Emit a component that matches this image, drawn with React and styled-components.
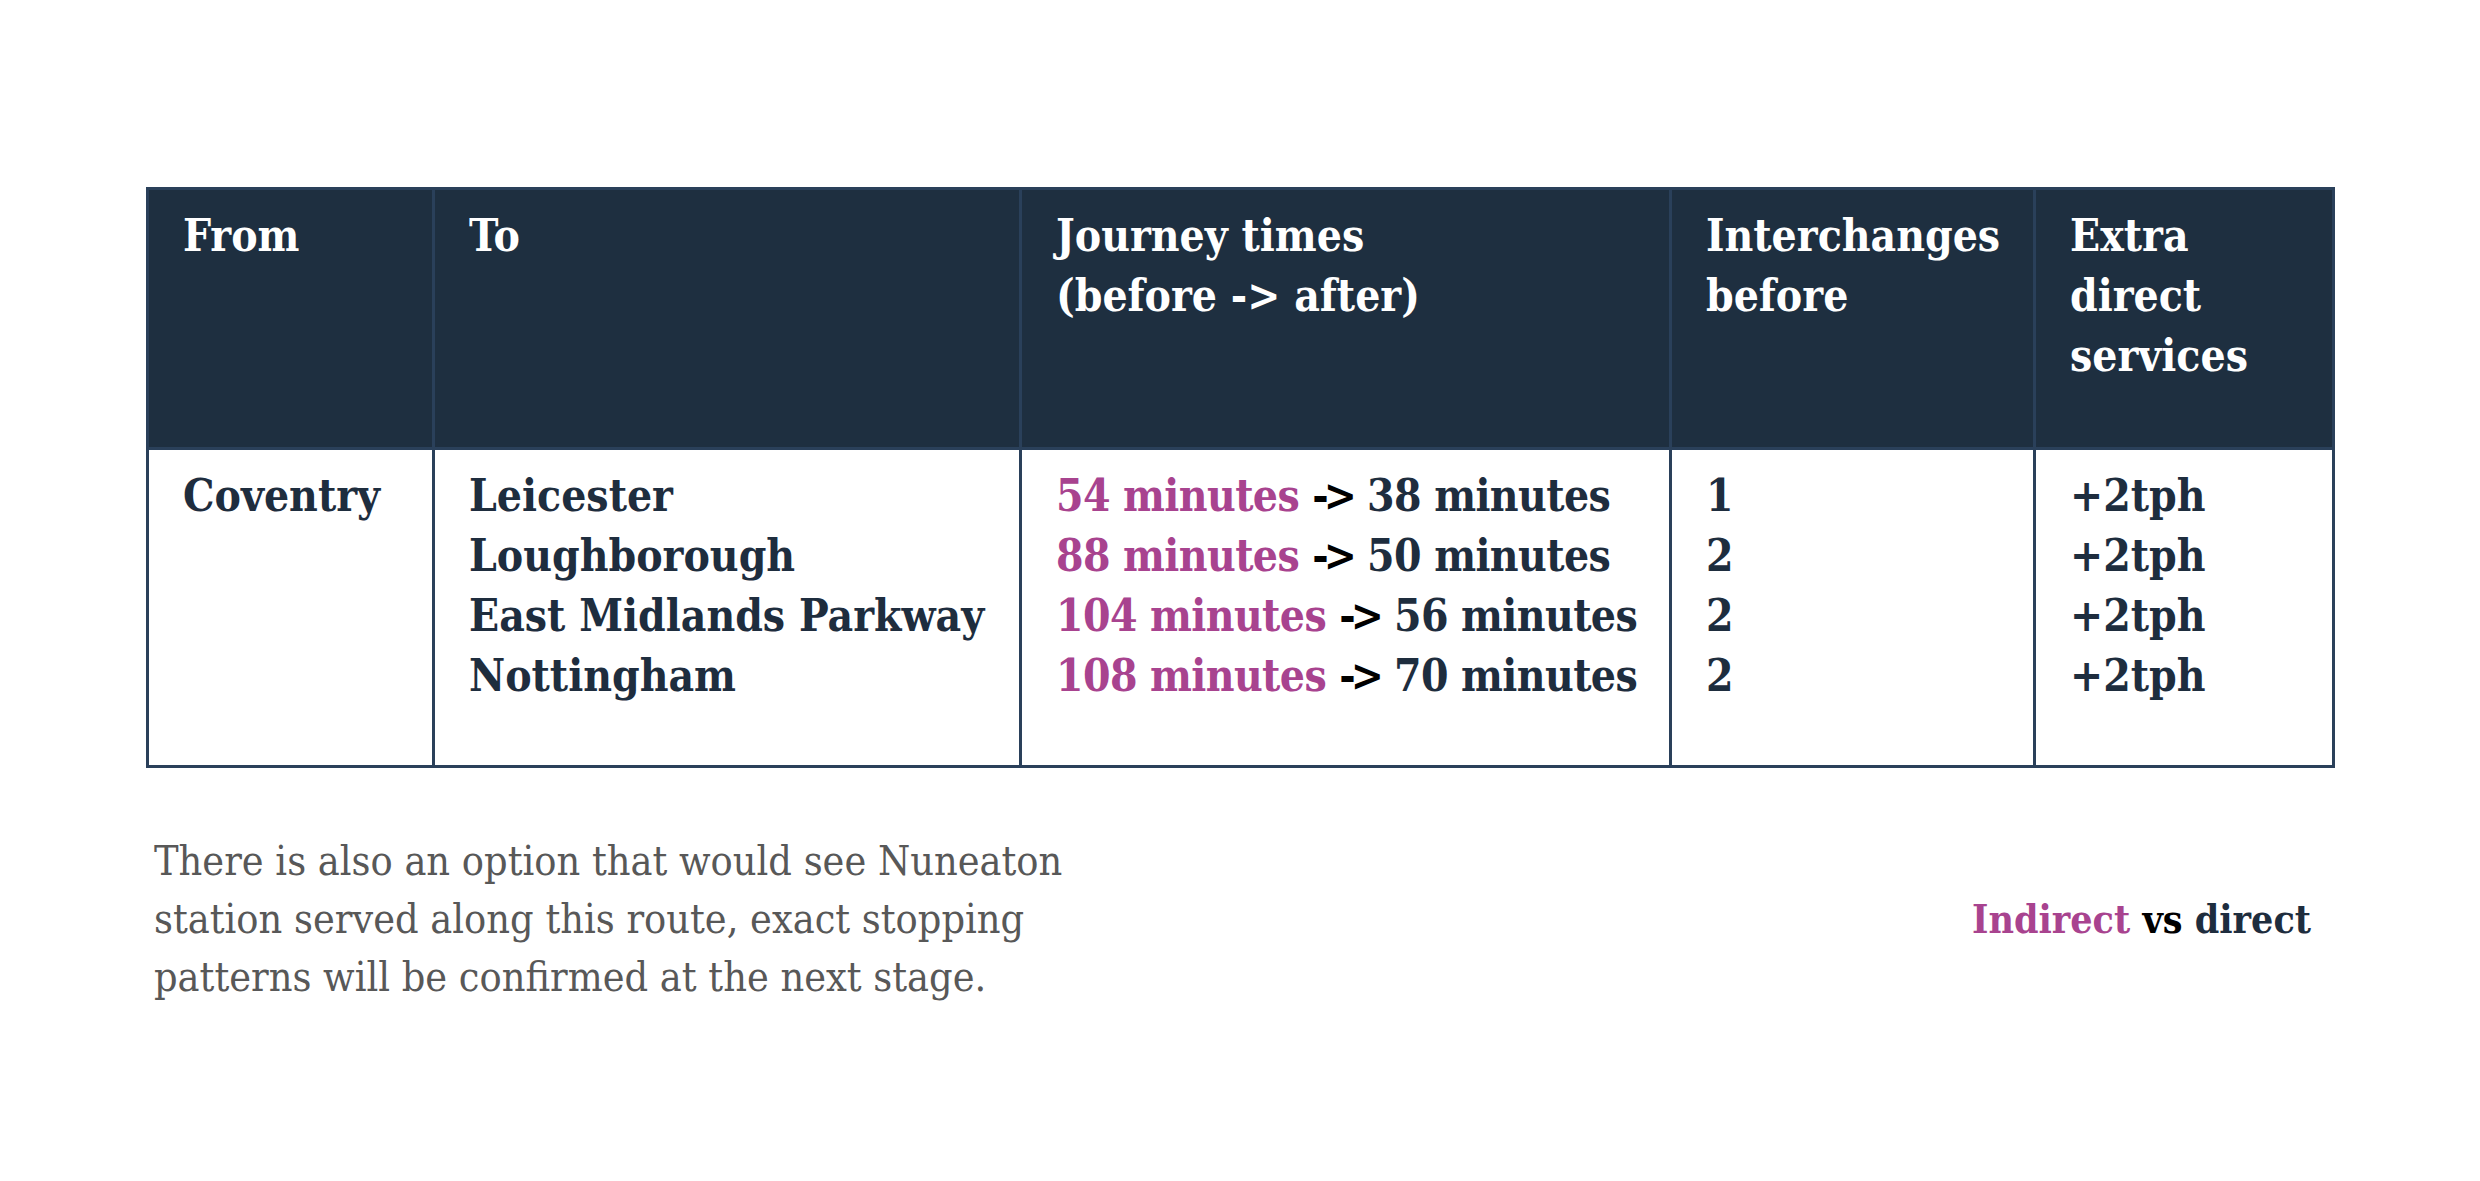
import styled, { createGlobalStyle } from "styled-components"

const GlobalStyle = createGlobalStyle`
  html, body {
    margin: 0;
    padding: 0;
    background: #ffffff;
  }
  body {
    font-family: "DejaVu Serif Condensed", "DejaVu Serif", serif;
    font-stretch: condensed;
  }
`

const routes = [
  { to: "Leicester", before: "54 minutes", after: "38 minutes", changes: 1, extra: "+2tph" },
  { to: "Loughborough", before: "88 minutes", after: "50 minutes", changes: 2, extra: "+2tph" },
  { to: "East Midlands Parkway", before: "104 minutes", after: "56 minutes", changes: 2, extra: "+2tph" },
  { to: "Nottingham", before: "108 minutes", after: "70 minutes", changes: 2, extra: "+2tph" },
]

export default function App() {
  return (
    <Page>
      <GlobalStyle />
      <Table>
        <HeadCell>From</HeadCell>
        <HeadCell>To</HeadCell>
        <HeadCell>Journey times<br />(before -&gt; after)</HeadCell>
        <HeadCell>Interchanges<br />before</HeadCell>
        <HeadCell>Extra<br />direct<br />services</HeadCell>

        <BodyCell>Coventry</BodyCell>
        <BodyCell>
          {routes.map(r => <Line key={r.to}>{r.to}</Line>)}
        </BodyCell>
        <BodyCell>
          {routes.map(r => (
            <Line key={r.to} $tight>
              <Indirect>{r.before}</Indirect> <Arrow>-&gt;</Arrow> {r.after}
            </Line>
          ))}
        </BodyCell>
        <BodyCell>
          {routes.map(r => <Line key={r.to}>{r.changes}</Line>)}
        </BodyCell>
        <BodyCell>
          {routes.map(r => <Line key={r.to}>{r.extra}</Line>)}
        </BodyCell>
      </Table>

      <Footer>
        <Note>
          There is also an option that would see Nuneaton<br />
          station served along this route, exact stopping<br />
          patterns will be confirmed at the next stage.
        </Note>
        <Legend>
          <Indirect>Indirect</Indirect> <Vs>vs</Vs> direct
        </Legend>
      </Footer>
    </Page>
  )
}

const Page = styled.div`
  width: 2480px;
  height: 1181px;
  box-sizing: border-box;
  padding: 187px 145px 0 146px;
`

const Table = styled.div`
  display: grid;
  grid-template-columns: 283px 584px 647px 361px 296px;
  grid-template-rows: 257px 315px;
  gap: 3px;
  padding: 3px;
  width: 2189px;
  box-sizing: border-box;
  background: #2a405a;
`

const HeadCell = styled.div`
  background: #1e2f40;
  color: #ffffff;
  font-size: 44px;
  line-height: 60px;
  font-weight: 700;
  padding: 16px 34px 0;
`

const BodyCell = styled.div`
  background: #ffffff;
  color: #1e2d3e;
  font-size: 44px;
  line-height: 60px;
  font-weight: 700;
  padding: 16px 34px 0;
`

const Line = styled.div`
  white-space: nowrap;
  letter-spacing: ${p => (p.$tight ? "-0.6px" : "0")};
`

const Indirect = styled.span`
  color: #a8438f;
`

const Arrow = styled.span`
  color: #000000;
  letter-spacing: -5px;
  margin-right: 2px;
`

const Footer = styled.div`
  display: flex;
  justify-content: space-between;
  align-items: center;
  margin-top: 64px;
  padding: 0 24px 0 8px;
`

const Note = styled.p`
  margin: 0;
  color: #585858;
  font-size: 41px;
  line-height: 58px;
  font-weight: 400;
`

const Legend = styled.div`
  color: #1e2d3e;
  font-size: 39px;
  font-weight: 700;
`

const Vs = styled.span`
  color: #000000;
`
